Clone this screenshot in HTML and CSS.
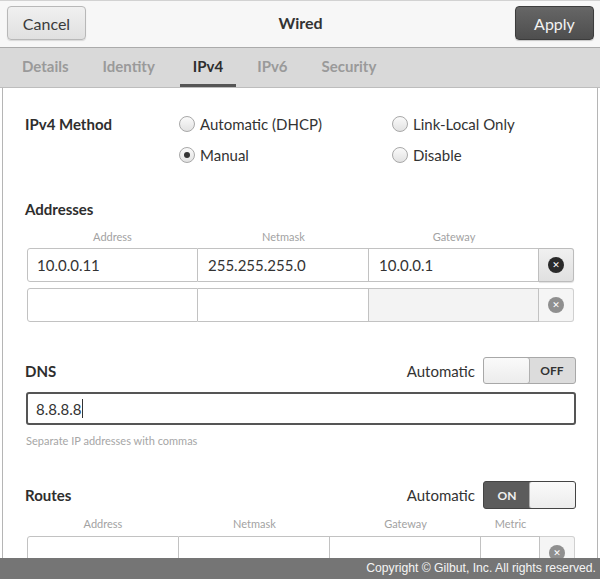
FILE: index.html
```html
<!DOCTYPE html>
<html>
<head>
<meta charset="utf-8">
<link rel="stylesheet" href="styles.css">
</head>
<body>
<div class="window">
  <header class="headerbar">
    <button class="btn btn-cancel">Cancel</button>
    <div class="title">Wired</div>
    <button class="btn btn-apply">Apply</button>
  </header>
  <nav class="tabs">
    <div class="tab">Details</div>
    <div class="tab">Identity</div>
    <div class="tab active">IPv4</div>
    <div class="tab">IPv6</div>
    <div class="tab">Security</div>
  </nav>
  <main class="content">
    <section class="method">
      <div class="label">IPv4 Method</div>
      <label class="radio"><span class="dot"></span>Automatic (DHCP)</label>
      <label class="radio"><span class="dot"></span>Link-Local Only</label>
      <div></div>
      <label class="radio"><span class="dot checked"></span>Manual</label>
      <label class="radio"><span class="dot"></span>Disable</label>
    </section>

    <h2 class="heading addr-heading">Addresses</h2>
    <div class="cols cols-addr">
      <span>Address</span><span>Netmask</span><span>Gateway</span><span></span>
    </div>
    <div class="row cols-addr">
      <div class="entry first">10.0.0.11</div>
      <div class="entry">255.255.255.0</div>
      <div class="entry">10.0.0.1</div>
      <div class="del"><span class="x dark">&#x2715;</span></div>
    </div>
    <div class="row cols-addr row2">
      <div class="entry first"></div>
      <div class="entry"></div>
      <div class="entry disabled"></div>
      <div class="del flat"><span class="x grey">&#x2715;</span></div>
    </div>

    <div class="sechead dns-head">
      <h2 class="heading">DNS</h2>
      <div class="auto">Automatic
        <div class="switch off"><span class="knob"></span><span class="state">OFF</span></div>
      </div>
    </div>
    <div class="dns-entry">8.8.8.8<span class="caret"></span></div>
    <div class="hint">Separate IP addresses with commas</div>

    <div class="sechead routes-head">
      <h2 class="heading">Routes</h2>
      <div class="auto">Automatic
        <div class="switch on"><span class="state">ON</span><span class="knob"></span></div>
      </div>
    </div>
    <div class="cols cols-route">
      <span>Address</span><span>Netmask</span><span>Gateway</span><span>Metric</span><span></span>
    </div>
    <div class="row cols-route">
      <div class="entry first"></div>
      <div class="entry"></div>
      <div class="entry"></div>
      <div class="entry"></div>
      <div class="del flat"><span class="x grey">&#x2715;</span></div>
    </div>
  </main>
</div>
<footer class="copy">Copyright © Gilbut, Inc. All rights reserved.</footer>
</body>
</html>
```

FILE: styles.css
```css
* { box-sizing: border-box; }
html, body { margin: 0; padding: 0; }
body {
  width: 600px;
  height: 579px;
  overflow: hidden;
  background: #fff;
  font-family: Lato, "Open Sans", sans-serif;
  color: #2e2e2e;
}
.window {
  height: 558px;
  overflow: hidden;
  display: flex;
  flex-direction: column;
}
.headerbar {
  height: 47px;
  flex: none;
  background: #f7f7f7;
  border-top: 1px solid #d2d2d2;
  display: flex;
  align-items: flex-start;
  justify-content: space-between;
  padding: 5px 6px 0 7px;
}
.btn {
  width: 79px;
  height: 34px;
  border-radius: 4px;
  font-family: inherit;
  font-size: 16px;
  padding: 0;
}
.btn-cancel {
  background: linear-gradient(#f0f0f0, #e0e0e0);
  border: 1px solid #b8b8b8;
  color: #3a3a3a;
  box-shadow: 0 1px 1px rgba(0,0,0,0.12);
}
.btn-apply {
  background: linear-gradient(#666, #4e4e4e);
  border: 1px solid #3c3c3c;
  color: #f2f2f2;
  box-shadow: 0 1px 1px rgba(0,0,0,0.2);
}
.title {
  font-weight: 700;
  font-size: 16px;
  line-height: 34px;
  color: #333;
}
.tabs {
  height: 41px;
  flex: none;
  background: #d9d9d9;
  border-top: 1px solid #ababab;
  border-bottom: 1px solid #bdbdbd;
  display: flex;
  gap: 8px;
  padding-left: 9px;
}
.tab {
  padding: 0 13px;
  font-size: 15px;
  font-weight: 700;
  color: #9a9a9a;
  display: flex;
  align-items: center;
  border-bottom: 3px solid transparent;
  padding-top: 0;
}
.tab.active {
  color: #2e2e2e;
  border-bottom-color: #555;
  margin-left: 4px;
}
.content {
  flex: 1;
  margin: 0 2px;
  border-left: 1px solid #b5b5b5;
  border-right: 1px solid #b5b5b5;
  padding: 26px 21px 0 22px;
  font-size: 15px;
}
.method {
  display: grid;
  grid-template-columns: 154px 213px 1fr;
  row-gap: 11px;
}
.label {
  font-weight: 700;
  line-height: 20px;
}
.radio {
  display: flex;
  align-items: center;
  line-height: 20px;
  color: #333;
}
.dot {
  width: 16px;
  height: 16px;
  border-radius: 50%;
  border: 1px solid #a8a8a8;
  background: linear-gradient(#fafafa, #e2e2e2);
  margin-right: 5px;
  position: relative;
  flex: none;
}
.dot.checked::after {
  content: "";
  position: absolute;
  width: 6px;
  height: 6px;
  border-radius: 50%;
  background: #333;
  left: 4px;
  top: 4px;
}
.heading {
  margin: 0;
  font-size: 15px;
  font-weight: 700;
  line-height: 20px;
}
.addr-heading { margin-top: 34px; }
.cols {
  display: grid;
  margin: 11px 0 0 2px;
  font-size: 11px;
  line-height: 14px;
  color: #a2a2a2;
  text-align: center;
}
.cols-addr { grid-template-columns: 171px 171px 170px 35px; }
.cols-route { grid-template-columns: 152px 151px 151px 59px 35px; margin-top: 8px; }
.row {
  display: grid;
  height: 34px;
  margin: 4px 0 0 2px;
  text-align: left;
}
.row2 { margin-top: 6px; }
.cols-route.row { margin-top: 5px; }
.entry {
  border: 1px solid #c2c2c2;
  border-left: none;
  background: #fff;
  padding: 0 10px;
  display: flex;
  align-items: center;
  font-size: 15px;
  color: #333;
}
.entry.first {
  border-left: 1px solid #c2c2c2;
  border-radius: 3px 0 0 3px;
  padding-left: 9px;
}
.entry.disabled { background: #f3f3f3; }
.del {
  border: 1px solid #bcbcbc;
  border-left: none;
  border-radius: 0 3px 3px 0;
  background: linear-gradient(#f0f0f0, #e0e0e0);
  display: flex;
  align-items: center;
  justify-content: center;
  box-shadow: 0 1px 1px rgba(0,0,0,0.12);
}
.del.flat {
  background: #f5f5f5;
  box-shadow: none;
  border-color: #d0d0d0;
}
.x {
  width: 16px;
  height: 16px;
  border-radius: 50%;
  color: #fff;
  font-size: 9px;
  font-weight: 900;
  display: flex;
  align-items: center;
  justify-content: center;
  font-family: "DejaVu Sans", sans-serif;
}
.x.dark { background: #2a2a2a; }
.x.grey { background: #8f8f8f; }
.sechead {
  display: flex;
  justify-content: space-between;
  align-items: center;
  height: 27px;
}
.dns-head { margin-top: 35px; }
.routes-head { margin-top: 33px; height: 28px; }
.auto {
  display: flex;
  align-items: center;
  gap: 8px;
  color: #333;
}
.switch {
  width: 93px;
  border: 1px solid #a8a8a8;
  border-radius: 3px;
  display: flex;
  overflow: hidden;
  font-size: 12px;
  font-weight: 700;
}
.sechead .switch { height: 27px; }
.routes-head .switch { height: 28px; }
.switch .knob {
  width: 47px;
  background: linear-gradient(#fafafa, #ececec);
  border: 1px solid #b0b0b0;
  border-radius: 3px;
  margin: -1px;
}
.switch .state {
  flex: 1;
  display: flex;
  align-items: center;
  justify-content: center;
}
.switch.off { background: #dcdcdc; color: #333; }
.switch.on { background: #5c5c5c; color: #f0f0f0; border-color: #444; }
.dns-entry {
  margin-top: 8px;
  height: 33px;
  border: 2px solid #555;
  border-radius: 3px;
  padding: 0 8px;
  display: flex;
  align-items: center;
  color: #333;
  margin-left: 1px;
}
.caret {
  width: 1px;
  height: 19px;
  background: #333;
  margin-left: 1px;
}
.hint {
  margin-top: 9px;
  font-size: 11px;
  line-height: 14px;
  color: #a6a6a6;
  margin-left: 1px;
}
.copy {
  height: 21px;
  background: #757575;
  color: #f4f4f4;
  font-family: "Liberation Sans", Arial, sans-serif;
  font-size: 12.2px;
  line-height: 21px;
  text-align: right;
  padding-right: 4px;
}
```
